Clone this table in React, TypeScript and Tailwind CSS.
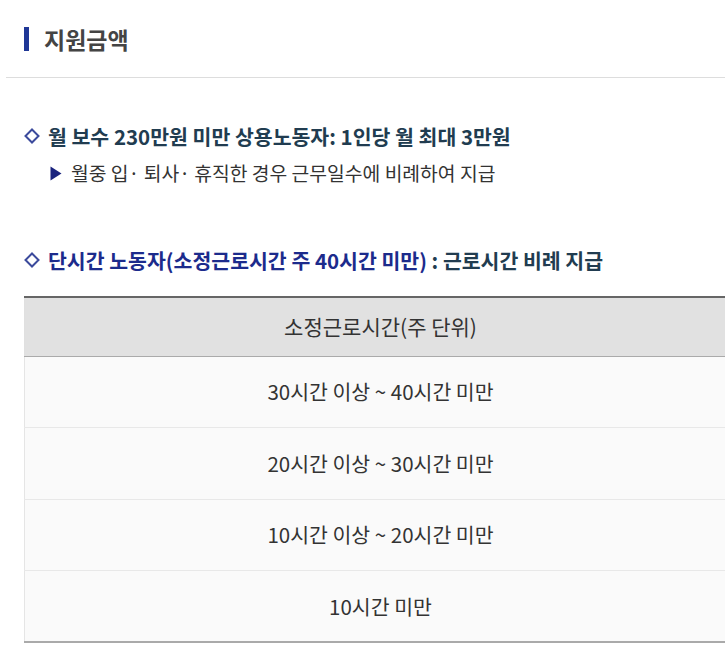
const rows = [
  "30시간 이상 ~ 40시간 미만",
  "20시간 이상 ~ 30시간 미만",
  "10시간 이상 ~ 20시간 미만",
  "10시간 미만",
];

function Diamond() {
  return (
    <svg width="16" height="16" viewBox="0 0 16 16" className="shrink-0">
      <path d="M8 1.5 L14.5 8 L8 14.5 L1.5 8 Z" fill="none" stroke="#3b4a9c" strokeWidth="2" />
    </svg>
  );
}

export default function App() {
  return (
    <div
      className="w-[725px] h-[653px] overflow-hidden bg-white text-[#333]"
      style={{ fontFamily: '"Noto Sans CJK KR", "Noto Sans", sans-serif' }}
    >
      {/* title */}
      <div className="ml-[6px] border-b border-[#dddddd] pb-[26px] pt-[27px]">
        <div className="flex items-center gap-[15px] pl-[18px]">
          <span className="block h-[24px] w-[5px] bg-[#1f3796]" />
          <h1 className="text-[23px] font-bold leading-[24px] text-[#444]">지원금액</h1>
        </div>
      </div>

      <div className="pl-[24px]">
        <div className="mt-[44px] flex items-center gap-[8px]">
          <Diamond />
          <h2 className="text-[20.5px] font-bold leading-[28px] text-[#213c50]">
            월 보수 230만원 미만 상용노동자: 1인당 월 최대 3만원
          </h2>
        </div>
        <div className="mt-[10px] flex items-center gap-[9px] pl-[26px]">
          <svg width="12" height="15" viewBox="0 0 12 15" className="shrink-0">
            <path d="M0.5 0.5 L11.5 7.5 L0.5 14.5 Z" fill="#1a237e" />
          </svg>
          <p className="text-[19.3px] leading-[26px] text-[#333]">
            월중 입· 퇴사· 휴직한 경우 근무일수에 비례하여 지급
          </p>
        </div>

        <div className="mt-[60px] flex items-center gap-[8px]">
          <Diamond />
          <h2 className="text-[20.5px] font-bold leading-[28px] text-[#213c50]">
            <span className="text-[#1c2b8c]">단시간 노동자(소정근로시간 주 40시간 미만)</span> : 근로시간 비례 지급
          </h2>
        </div>

        <table className="mt-[22px] w-[712px] border-collapse border-t-2 border-t-[#666] border-b-2 border-b-[#aaa]">
          <thead>
            <tr>
              <th className="h-[59px] border-b border-[#aaaaaa] border-l border-l-[#e0e0e0] bg-[#e1e1e1] text-[21px] font-normal text-[#333]">
                소정근로시간(주 단위)
              </th>
            </tr>
          </thead>
          <tbody>
            {rows.map((r, i) => (
              <tr key={i}>
                <td
                  className={`h-[71.5px] border-l border-l-[#e5e5e5] bg-[#fafafa] text-center text-[20.5px] text-[#333] ${
                    i < rows.length - 1 ? "border-b border-b-[#e8e8e8]" : ""
                  }`}
                >
                  {r}
                </td>
              </tr>
            ))}
          </tbody>
        </table>
      </div>
    </div>
  );
}
